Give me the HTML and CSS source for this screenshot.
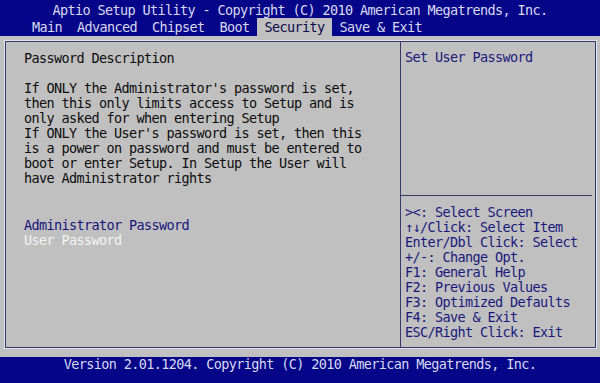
FILE: index.html
```html
<!DOCTYPE html>
<html>
<head>
<meta charset="utf-8">
<link rel="stylesheet" href="styles.css">
</head>
<body>
<header class="top">
  <div class="title">Aptio Setup Utility - Copyright (C) 2010 American Megatrends, Inc.</div>
  <nav class="tabs">
    <span class="tab">Main</span><span class="tab">Advanced</span><span class="tab">Chipset</span><span class="tab">Boot</span><span class="tab active">Security</span><span class="tab">Save &amp; Exit</span>
  </nav>
</header>
<main class="body">
  <div class="frame">
    <section class="left">
      <div class="line">Password Description</div>
      <p class="desc">If ONLY the Administrator's password is set,<br>then this only limits access to Setup and is<br>only asked for when entering Setup<br>If ONLY the User's password is set, then this<br>is a power on password and must be entered to<br>boot or enter Setup. In Setup the User will<br>have Administrator rights</p>
      <div class="menu">
        <div class="item">Administrator Password</div>
        <div class="item selected">User Password</div>
      </div>
    </section>
    <aside class="right">
      <div class="helptop">Set User Password</div>
      <div class="keys">
        <div>&gt;&lt;: Select Screen</div>
        <div>↑↓/Click: Select Item</div>
        <div>Enter/Dbl Click: Select</div>
        <div>+/-: Change Opt.</div>
        <div>F1: General Help</div>
        <div>F2: Previous Values</div>
        <div>F3: Optimized Defaults</div>
        <div>F4: Save &amp; Exit</div>
        <div>ESC/Right Click: Exit</div>
      </div>
    </aside>
  </div>
</main>
<footer class="foot">Version 2.01.1204. Copyright (C) 2010 American Megatrends, Inc.</footer>
</body>
</html>
```
FILE: styles.css
```css
* { box-sizing: border-box; }
html, body { margin: 0; padding: 0; }
body {
  width: 600px;
  height: 383px;
  overflow: hidden;
  background: #c0c0c0;
  font-family: "DejaVu Sans Mono", "Liberation Mono", monospace;
  font-size: 13.5px;
  letter-spacing: -0.627px;
  line-height: 15px;
  color: #0c0c0c;
  white-space: nowrap;
  display: flex;
  flex-direction: column;
}
.top {
  background: #05058a;
  color: #d8d8ee;
  height: 36px;
  flex: none;
}
.title {
  height: 18px;
  line-height: 18px;
  padding-top: 1px;
  text-align: center;
}
.tabs {
  height: 18px;
  line-height: 18px;
  padding-left: 24.5px;
  display: flex;
}
.tab {
  padding: 0 7.5px;
  white-space: pre;
}
.tab.active {
  background: #c0c0c0;
  color: #0a0a4a;
}
.body {
  height: 321px;
  flex: none;
  padding: 5px 4px 9px 5px;
}
.frame {
  height: 307px;
  border: 1px solid #38386c;
  box-shadow: 0 0 0 1px #e2e2ec;
  display: flex;
}
.left {
  width: 395px;
  flex: none;
  padding: 9px 0 0 18px;
  border-right: 1px solid #38386c;
}
.desc {
  margin: 15px 0 0;
}
.menu {
  margin-top: 32px;
}
.item {
  color: #14147a;
}
.item.selected {
  color: #f4f4f4;
}
.right {
  flex: 1;
  display: flex;
  flex-direction: column;
  color: #18187c;
}
.helptop {
  flex: 1;
  padding: 8px 0 0 4px;
}
.keys {
  border-top: 1px solid #38386c;
  margin-right: 3px;
  padding: 9px 0 7px 4px;
}
.foot {
  height: 26px;
  flex: none;
  background: #05058a;
  color: #d8d8ee;
  text-align: center;
}
```
